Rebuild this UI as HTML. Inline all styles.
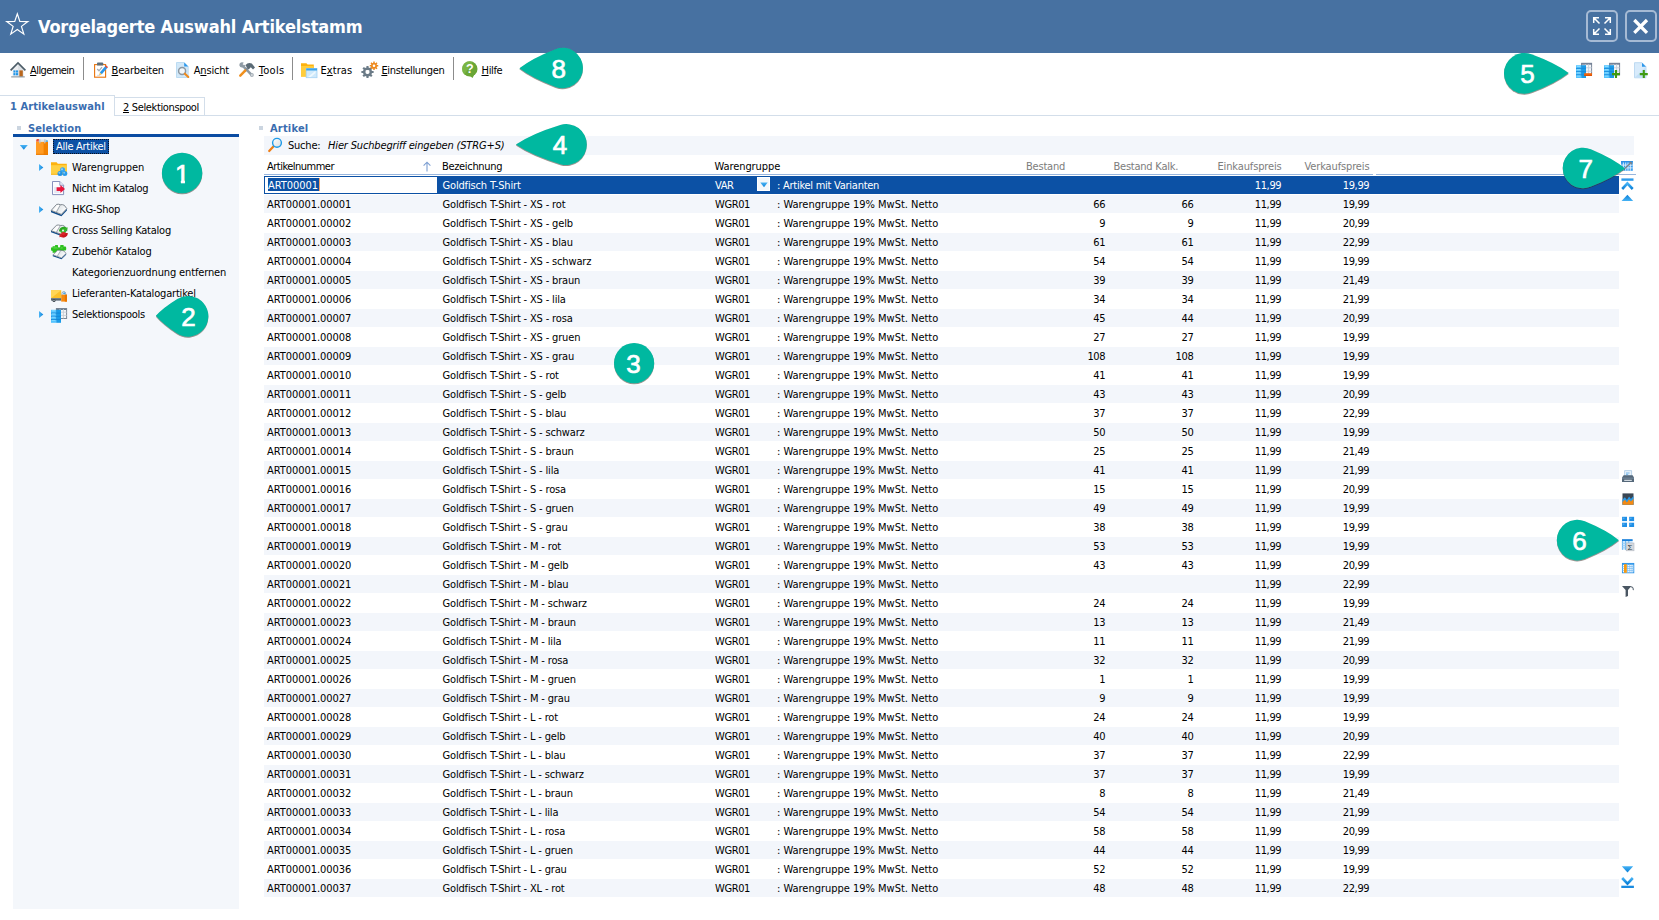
<!DOCTYPE html>
<html lang="de"><head><meta charset="utf-8"><title>Vorgelagerte Auswahl Artikelstamm</title>
<style>
*{box-sizing:border-box}
html,body{margin:0;padding:0}
body{width:1659px;height:920px;overflow:hidden;background:#fff;position:relative;font-family:'DejaVu Sans Condensed','Liberation Sans',sans-serif;font-size:11px;color:#000}
.abs{position:absolute}
svg{position:absolute;overflow:visible}
.t{position:absolute;height:14px;line-height:14px;white-space:nowrap}
.b{font-weight:bold;color:#3a6db0}
#title{left:0;top:0;width:1659px;height:53px;background:#4771a1}
#title .tt{position:absolute;left:38px;top:15px;font-weight:bold;font-size:18px;line-height:24px;height:24px;color:#fff;white-space:nowrap}
.tb{position:absolute;top:10px;width:32px;height:32px;border:2px solid #a6bad4;border-radius:5px}
.msep{position:absolute;top:57px;width:1px;height:23px;background:#8c8c8c}
.bul{position:absolute;width:4px;height:4px;background:#cbd5e0}
#left{left:13px;top:137px;width:226px;height:772px;background:#f4f7fb}
.row{position:absolute;left:264px;width:1355px;height:19px}
.row.s{background:#f3f6fb;background-clip:content-box;padding-top:1px}
.c{position:absolute;top:1px;height:19px;line-height:19px;white-space:nowrap}
.sel .c{top:1px}
.r{text-align:right}
.g{color:#7c7c7c}

.c1{left:3px;letter-spacing:-0.060px}
.c2{left:178.5px;letter-spacing:-0.162px}
.c3{left:451px;letter-spacing:-0.380px}
.c4{left:513px;letter-spacing:-0.017px}
.n1{left:741.5px;width:100px;letter-spacing:-0.382px;padding-right:0.382px}
.n2{left:829.7px;width:100px;letter-spacing:-0.382px;padding-right:0.382px}
.n3{left:917.6px;width:100px;letter-spacing:-0.382px;padding-right:0.382px}
.n4{left:1005.6px;width:100px;letter-spacing:-0.382px;padding-right:0.382px}
</style></head><body>
<div id="title" class="abs">
<svg style="left:4px;top:11px" width="28" height="28" viewBox="0 0 28 28"><path transform="translate(13.3 13.3) scale(0.945) translate(-13.5 -13.9)" d="M13.5 2.8 L16.2 10.9 L24.7 11 L17.9 16.1 L20.4 24.3 L13.5 19.4 L6.6 24.3 L9.1 16.1 L2.3 11 L10.8 10.9 Z" fill="none" stroke="#fff" stroke-width="1.25" stroke-linejoin="miter"/></svg>
<div class="tt" style="letter-spacing:-0.158px">Vorgelagerte Auswahl Artikelstamm</div>
<div class="tb" style="left:1586px"><svg style="left:-2px;top:-2px" width="32" height="32" viewBox="0 0 32 32"><g stroke="#fff" stroke-width="1.5" fill="none"><path d="M13.5 13.5L8 8M7.7 13V7.7H13M18.5 13.5L24 8M19 7.7h5.3V13M13.5 18.5L8 24M7.7 19v5.3H13M18.5 18.5L24 24M24.3 19v5.3H19"/></g></svg></div>
<div class="tb" style="left:1625px"><svg style="left:-2px;top:-2px" width="32" height="32" viewBox="0 0 32 32"><path d="M9.3 10L22 22.8M22 10L9.3 22.8" stroke="#fff" stroke-width="3.3" fill="none"/></svg></div>
</div>
<div class="t" style="left:30.1px;top:64px;letter-spacing:-0.588px;"><u>A</u>llgemein</div>
<div class="t" style="left:111.6px;top:64px;letter-spacing:-0.21px;"><u>B</u>earbeiten</div>
<div class="t" style="left:193.8px;top:64px;letter-spacing:-0.208px;">A<u>n</u>sicht</div>
<div class="t" style="left:258.8px;top:64px;letter-spacing:0.278px;"><u>T</u>ools</div>
<div class="t" style="left:320.5px;top:64px;letter-spacing:0.064px;">E<u>x</u>tras</div>
<div class="t" style="left:381.4px;top:64px;letter-spacing:-0.309px;"><u>E</u>instellungen</div>
<div class="t" style="left:481.5px;top:64px;letter-spacing:-0.329px;"><u>H</u>ilfe</div>
<div class="msep" style="left:83px"></div>
<div class="msep" style="left:292px"></div>
<div class="msep" style="left:453px"></div>
<svg style="left:0;top:0" width="1659" height="100" viewBox="0 0 1659 100">
<!-- house -->
<g transform="translate(10,62)">
<path d="M2.6 7.6L8 2.6l5.4 5V14.6H2.6z" fill="#eceef1"/>
<path d="M8 2.6l5.4 5V14.6H8z" fill="#dde1e5"/>
<path d="M0.6 8.3L8 1l7.4 7.3" fill="none" stroke="#4c5c67" stroke-width="1.7" stroke-linejoin="miter"/>
<rect x="3.4" y="8.4" width="2.1" height="2.2" fill="#2196e8"/><rect x="6" y="8.4" width="2.1" height="2.2" fill="#2196e8"/>
<rect x="3.4" y="11.1" width="2.1" height="2.2" fill="#2196e8"/><rect x="6" y="11.1" width="2.1" height="2.2" fill="#2196e8"/>
<rect x="9.4" y="8.4" width="3.4" height="6.2" fill="#b9671d"/>
<rect x="1.2" y="14.4" width="13.6" height="1" fill="#7f8c95"/>
</g>
<!-- clipboard -->
<g transform="translate(94,62)">
<rect x="0.6" y="2.6" width="11" height="12.6" fill="#fff" stroke="#e8730c" stroke-width="1.1"/>
<rect x="3" y="0.4" width="6.2" height="3.2" rx="0.9" fill="#5d6e7b"/>
<path d="M3.2 7L5 8.8l3-3.6" fill="none" stroke="#a4adb5" stroke-width="1.3"/>
<path d="M12.6 4.6L6.8 11.4" stroke="#2a96ea" stroke-width="2.7" fill="none"/>
<path d="M12 3.2l2 1.9-1 1.2-2-1.9z" fill="#e8503a"/>
<path d="M5.9 10.5l1.9 1.7-2.9 1.3z" fill="#f5c04a"/>
<path d="M3.2 13.3h3" stroke="#c8ced4" stroke-width="0.9"/>
</g>
<!-- view -->
<g transform="translate(176,62)">
<path d="M0.5 0.5H8.2L12.2 4.5V15.5H0.5z" fill="#d2e8f8" stroke="#b7d9f2" stroke-width="0.9"/>
<path d="M8.2 0.5L12.2 4.5H8.2z" fill="#2c97ea"/>
<circle cx="6.1" cy="8.9" r="3.5" fill="#f3f7fa" stroke="#8c98a2" stroke-width="1.5"/>
<path d="M8.9 11.7l3.4 3.3" stroke="#f08a1c" stroke-width="2.1" stroke-linecap="round"/>
</g>
<!-- tools -->
<g transform="translate(239,62)">
<path d="M3.3 3.3L12.6 12.8" stroke="#8f9ba5" stroke-width="2.5" stroke-linecap="round"/>
<path d="M0.3 3.2a3 3 0 0 1 4.6-2.5L3 2.6l1 1.3 2.2-1.5A3 3 0 0 1 0.3 3.2z" fill="#8f9ba5"/>
<circle cx="12.9" cy="13" r="1.9" fill="#a5afb7"/><circle cx="12.9" cy="13" r="0.7" fill="#fff"/>
<path d="M5.5 9.4L9.4 5.4" stroke="#7f8b95" stroke-width="2.3"/><path d="M1.3 13.6L6.2 8.7" stroke="#f0901e" stroke-width="2.5" stroke-linecap="round"/>
<path d="M6.4 3.2Q9.2 -0.2 12.8 1.6L16 5.6l-2 1.8-2.2-2.2-2.2 2.3z" fill="#5b6b76"/>
</g>
<!-- extras -->
<g transform="translate(301,63)">
<path d="M0 0.3H5.4L6.6 1.6H12.8V13.6H0z" fill="#fdb20f"/>
<path d="M0 3H12.8V13.6H0z" fill="#ffcd3c"/>
<rect x="5.2" y="5.4" width="10.8" height="9.3" fill="#cfe9fb" stroke="#a6d3f5" stroke-width="0.8"/>
<rect x="5.2" y="5.4" width="10.8" height="2.1" fill="#3ba3ec"/>
<path d="M7 14l7.5-6.3v2.4L9.8 14z" fill="#eef8fe"/>
</g>
<!-- gears -->
<path d="M373.61 70.93L373.61 73.07L371.97 73.07L371.42 74.40L372.57 75.57L371.07 77.07L369.90 75.92L368.57 76.47L368.57 78.11L366.43 78.11L366.43 76.47L365.10 75.92L363.93 77.07L362.43 75.57L363.58 74.40L363.03 73.07L361.39 73.07L361.39 70.93L363.03 70.93L363.58 69.60L362.43 68.43L363.93 66.93L365.10 68.08L366.43 67.53L366.43 65.89L368.57 65.89L368.57 67.53L369.90 68.08L371.07 66.93L372.57 68.43L371.42 69.60L371.97 70.93ZM365.40 72.00 a2.10 2.10 0 1 0 4.20 0a2.10 2.10 0 1 0 -4.20 0Z" fill="#6b7b87" fill-rule="evenodd"/><path d="M378.24 65.06L378.24 66.54L377.01 66.52L376.64 67.42L377.52 68.27L376.47 69.32L375.62 68.44L374.72 68.81L374.74 70.04L373.26 70.04L373.28 68.81L372.38 68.44L371.53 69.32L370.48 68.27L371.36 67.42L370.99 66.52L369.76 66.54L369.76 65.06L370.99 65.08L371.36 64.18L370.48 63.33L371.53 62.28L372.38 63.16L373.28 62.79L373.26 61.56L374.74 61.56L374.72 62.79L375.62 63.16L376.47 62.28L377.52 63.33L376.64 64.18L377.01 65.08ZM372.70 65.80 a1.30 1.30 0 1 0 2.60 0a1.30 1.30 0 1 0 -2.60 0Z" fill="#ee8a1e" fill-rule="evenodd"/>
<path d="M365.6 70.3h3.8l-1.2 3.4h-1.4z" fill="#fff" opacity="0.85"/>
<!-- help -->
<g transform="translate(462,61)">
<circle cx="7.8" cy="7.9" r="7.7" fill="#6aa635"/>
<path d="M7.8 0.2A7.7 7.7 0 0 0 2.4 13.4L11 1z" fill="#80b94a" opacity="0.75"/>
<path d="M7.2 14.6l6-2.8-2.6 5.2z" fill="#6aa635"/>
<text x="7.8" y="12.2" font-family="Liberation Sans, sans-serif" font-weight="bold" font-size="12.5" fill="#fff" text-anchor="middle">?</text>
</g>
</svg>

<div class="abs" style="left:0;top:95px;width:115px;height:21px;border-top:1px solid #d3deea;border-right:1px solid #d3deea"></div>
<div class="abs" style="left:114px;top:97px;width:91px;height:19px;border:1px solid #d3deea"></div>
<div class="abs" style="left:114px;top:115px;width:1545px;height:1px;background:#d3deea"></div>
<div class="t b" style="left:10px;top:100px;letter-spacing:0.09px;">1 Artikelauswahl</div>
<div class="t" style="left:123px;top:101px;letter-spacing:-0.356px;"><u>2</u> Selektionspool</div>
<div class="bul" style="left:17px;top:126px"></div>
<div class="t b" style="left:28px;top:122px;letter-spacing:0.1px;">Selektion</div>
<div class="bul" style="left:259px;top:126px"></div>
<div class="t b" style="left:270px;top:122px;letter-spacing:0.19px;">Artikel</div>
<div class="abs" style="left:13px;top:134px;width:226px;height:3px;background:#0a4ca2"></div>
<div id="left" class="abs"></div>
<div class="abs" style="left:53px;top:139px;width:56px;height:15px;background:#0c51a5;border:1px dotted #0a1020"></div>
<div class="t" style="left:56px;top:140px;letter-spacing:-0.287px;color:#fff">Alle Artikel</div>
<div class="t" style="left:72px;top:161px;letter-spacing:-0.055px;">Warengruppen</div>
<div class="t" style="left:72px;top:182px;letter-spacing:-0.354px;">Nicht im Katalog</div>
<div class="t" style="left:72px;top:203px;letter-spacing:-0.254px;">HKG-Shop</div>
<div class="t" style="left:72px;top:224px;letter-spacing:-0.238px;">Cross Selling Katalog</div>
<div class="t" style="left:72px;top:245px;letter-spacing:-0.19px;">Zubehör Katalog</div>
<div class="t" style="left:72px;top:266px;letter-spacing:-0.135px;">Kategorienzuordnung entfernen</div>
<div class="t" style="left:72px;top:287px;letter-spacing:-0.179px;">Lieferanten-Katalogartikel</div>
<div class="t" style="left:72px;top:308px;letter-spacing:-0.304px;">Selektionspools</div>
<svg style="left:0;top:0" width="260" height="340" viewBox="0 0 260 340">
<defs>
<linearGradient id="gb" x1="0" y1="0" x2="0" y2="1"><stop offset="0" stop-color="#4db6f6"/><stop offset="1" stop-color="#0b82da"/></linearGradient>
<linearGradient id="gbh" x1="0" y1="0" x2="1" y2="0"><stop offset="0" stop-color="#4db6f6"/><stop offset="1" stop-color="#0b82da"/></linearGradient>
<linearGradient id="pg" x1="0" y1="0" x2="1" y2="0.4"><stop offset="0" stop-color="#dfe3e7"/><stop offset="0.45" stop-color="#ffffff"/><stop offset="0.55" stop-color="#e3e7ea"/><stop offset="1" stop-color="#fbfcfd"/></linearGradient>
</defs>
<!-- expanders -->
<path d="M19.8 144.9h8l-4 4.8z" fill="url(#gb)"/>
<path d="M39 164l4.3 3.5-4.3 3.5z" fill="url(#gbh)"/>
<path d="M39 206l4.3 3.5-4.3 3.5z" fill="url(#gbh)"/>
<path d="M39 311l4.3 3.5-4.3 3.5z" fill="url(#gbh)"/>
<!-- bag -->
<g transform="translate(36,139)">
<rect x="0" y="2.4" width="12" height="13.4" fill="#ff9b22"/>
<rect x="7.6" y="2.4" width="4.4" height="13.4" fill="#f28200"/>
<rect x="0" y="14.8" width="12" height="1" fill="#e87800"/>
<path d="M0.2 2.6V1.4Q0.2 0 1.6 0H3v2.6z" fill="#e8503a"/>
<rect x="2.8" y="0.4" width="8" height="2.4" fill="#dbe6ef"/>
<rect x="3.2" y="0.2" width="1.3" height="4.2" rx="0.6" fill="#b9c3cc"/><rect x="8.2" y="0.2" width="1.3" height="4.2" rx="0.6" fill="#b9c3cc"/>
<rect x="9.8" y="1.2" width="2" height="1.8" fill="#59b5f2"/>
</g>
<!-- folder with cubes -->
<g transform="translate(51,162)">
<path d="M0 0.3H5.6L6.8 1.7H15.8V12.6H0z" fill="#fdb20f"/>
<path d="M0 3.2H15.8V12.6H0z" fill="#ffd042"/>
<path d="M0 11.8H15.8V12.6H0z" fill="#f5b21a"/>
<circle cx="11.6" cy="7.8" r="2.5" fill="#3aa6f0"/><circle cx="9" cy="11.4" r="2.5" fill="#2292e4"/><circle cx="13.8" cy="11.4" r="2.5" fill="#2a9bea"/>
<circle cx="11" cy="7.2" r="1" fill="#8fd0fa"/><circle cx="8.4" cy="10.8" r="1" fill="#7cc6f7"/><circle cx="13.2" cy="10.8" r="1" fill="#7cc6f7"/>
</g>
<!-- doc red arrow -->
<g transform="translate(52,181)">
<path d="M0.5 0.5H7.8L11.6 4.3V13.6H0.5z" fill="#fbfbfe" stroke="#7a86b6" stroke-width="0.9"/>
<path d="M7.8 0.5V4.3H11.6" fill="#e9ecf6" stroke="#7a86b6" stroke-width="0.8"/>
<path d="M2.2 7h3M2.2 9h2.4M2.2 11h5.5" stroke="#c3c9e2" stroke-width="0.8"/>
<path d="M4.6 6.3H8.4V4.1L13 8.1 8.4 12.1V9.9H4.6z" fill="#e8153c"/>
</g>
<!-- HKG book -->
<g transform="translate(51,204)">
<path d="M0 6.5L10.3 10.5L15.9 4.7V6.4L10.4 12.3L0 8.2z" fill="#0e4c8c"/>
<path d="M0.2 6.4L5.6 0.4Q7.6 -0.1 9.4 0.7Q11.6 0.3 13.3 1.3L15.8 4.6L10.3 10.4z" fill="url(#pg)" stroke="#69737c" stroke-width="0.85" stroke-linejoin="round"/>
<path d="M9.4 0.8L5.3 8.3" stroke="#8e979f" stroke-width="0.8"/>
</g>
<!-- cross selling -->
<g transform="translate(51,224.8)">
<g transform="scale(1,0.92)">
<path d="M0 6.5L10.3 10.5L15.9 4.7V6.4L10.4 12.3L0 8.2z" fill="#0e4c8c"/>
<path d="M0.2 6.4L5.6 0.4Q7.6 -0.1 9.4 0.7Q11.6 0.3 13.3 1.3L15.8 4.6L10.3 10.4z" fill="url(#pg)" stroke="#69737c" stroke-width="0.85" stroke-linejoin="round"/>
<path d="M9.4 0.8L5.3 8.3" stroke="#8e979f" stroke-width="0.8"/>
</g>
<circle cx="12.2" cy="5.6" r="3" fill="#3dbb30"/><path d="M9.2 6.6A3.4 3.4 0 0 1 15.4 4.6" fill="none" stroke="#2aa81f" stroke-width="2.4"/><circle cx="12" cy="5.8" r="1" fill="#f4f7fb"/>
<path d="M13.2 3.4L16.6 2.4L16.2 6.4z" fill="#35b52a"/>
<circle cx="12.6" cy="9.8" r="2.6" fill="#d9252a"/><path d="M15.6 8.2A3.3 3.3 0 0 1 9.8 10.4" fill="none" stroke="#c8161e" stroke-width="2.4"/>
<path d="M11.8 11.8L8.4 12.4L8.8 8.2z" fill="#d9252a"/>
</g>
<!-- zubehoer -->
<g transform="translate(51,245)">
<path d="M1.6 1.2H4.2Q3.4 -0.2 5 0H6.2Q7.4 0 7 1.2Q6.6 2.6 8 2.6Q9.6 2.6 9.2 1.2Q8.8 0 10 0H12.6V1.6H13.8Q15.2 1.4 15.2 3V4.2Q15.2 5.6 13.8 5.4H12.6V7.8H1.6V5.8Q0 6.2 0 4.6V3.4Q0 2 1.6 2.4z" fill="#2cc01e"/>
<path d="M2.4 2.2H6Q6.6 3.6 8.2 3.6Q9.8 3.6 10.2 2.2H11.6V3.4H2.4z" fill="#6fe05c" opacity="0.7"/>
<g transform="translate(1.8,5) scale(0.84,0.76)">
<path d="M0 6.5L10.3 10.5L15.9 4.7V6.4L10.4 12.3L0 8.2z" fill="#0e4c8c"/>
<path d="M0.2 6.4L5.6 0.4Q7.6 -0.1 9.4 0.7Q11.6 0.3 13.3 1.3L15.8 4.6L10.3 10.4z" fill="url(#pg)" stroke="#69737c" stroke-width="0.85" stroke-linejoin="round"/>
<path d="M9.4 0.8L5.3 8.3" stroke="#8e979f" stroke-width="0.8"/>
</g>
</g>
<!-- truck -->
<g transform="translate(51,290)">
<rect x="0" y="0.2" width="10.2" height="8" fill="#fbc02a"/>
<path d="M0 0.2H10.2L0 8.2z" fill="#ffd657"/>
<rect x="0" y="8.2" width="10.2" height="2.4" fill="#5a6872"/>
<circle cx="3" cy="10.4" r="1.5" fill="#3a444c"/><circle cx="3" cy="10.4" r="0.6" fill="#cfd6dc"/>
<rect x="10.2" y="4.6" width="5.8" height="7" fill="#f58a12"/>
<rect x="13.8" y="4.6" width="2.2" height="7" fill="#e87500"/>
<path d="M11 4.8V3.4a1.8 1.8 0 0 1 3.6 0v1.4" fill="none" stroke="#8aa0b2" stroke-width="0.9"/>
<rect x="12.2" y="2.6" width="2" height="1.6" fill="#3aa6f0"/>
</g>
<!-- selektionspools -->
<g transform="translate(51,308)">
<rect x="5.4" y="0.5" width="10.2" height="10" fill="#f3f5f7" stroke="#7b8896" stroke-width="1"/>
<path d="M5.4 1.4H15.6" stroke="#6c7a89" stroke-width="1.2"/>
<path d="M9 1v9.4M12.4 1v9.4M5.4 4.2H15.6M5.4 7.4H15.6" stroke="#c6cdd5" stroke-width="0.9"/>
<rect x="0" y="1.8" width="5.2" height="13" fill="#52c3ff"/>
<rect x="5.2" y="1.8" width="4.8" height="13" fill="#1a9be8"/>
<path d="M0 5.1H10M0 8.3H10M0 11.5H10" stroke="#1286d8" stroke-width="0.9"/>
<path d="M0.8 2.8h3.6M0.8 6h3.6M0.8 9.2h3.6M0.8 12.4h3.6" stroke="#8edcff" stroke-width="0.9"/>
</g>
</svg>

<div class="abs" style="left:264px;top:136px;width:1370px;height:19px;background:#f3f6fb"></div>
<svg style="left:266px;top:136px" width="18" height="18" viewBox="0 0 18 18"><defs><linearGradient id="mg" x1="0" y1="0" x2="1" y2="1"><stop offset="0" stop-color="#ffffff"/><stop offset="1" stop-color="#d9dde1"/></linearGradient></defs><path d="M7.4 10.4L3.2 15" stroke="#ef7d14" stroke-width="2.2" stroke-linecap="round"/><circle cx="11" cy="6.8" r="4.4" fill="url(#mg)" stroke="#1e9be8" stroke-width="1.4"/></svg>
<div class="t" style="left:288px;top:139px;letter-spacing:-0.221px;">Suche:</div>
<div class="t" style="left:328px;top:139px;letter-spacing:-0.157px;font-style:italic">Hier Suchbegriff eingeben (STRG+S)</div>
<div class="t" style="left:267px;top:160px;letter-spacing:-0.512px;">Artikelnummer</div>
<div class="t" style="left:442px;top:160px;letter-spacing:-0.323px;">Bezeichnung</div>
<div class="t" style="left:714.5px;top:160px;letter-spacing:-0.083px;">Warengruppe</div>
<div class="t" style="left:1026.0px;top:160px;letter-spacing:-0.208px;color:#7c7c7c">Bestand</div>
<div class="t" style="left:1113.5px;top:160px;letter-spacing:-0.231px;color:#7c7c7c">Bestand Kalk.</div>
<div class="t" style="left:1217.5px;top:160px;letter-spacing:-0.142px;color:#7c7c7c">Einkaufspreis</div>
<div class="t" style="left:1304.5px;top:160px;letter-spacing:-0.132px;color:#7c7c7c">Verkaufspreis</div>
<div class="abs" style="left:264px;top:174px;width:1109px;height:1px;background:#98b6de"></div>
<div class="abs" style="left:1376px;top:174px;width:260px;height:1px;background:#98b6de"></div>
<svg style="left:422px;top:161px" width="10" height="11" viewBox="0 0 10 11"><path d="M5 10.5V1.8M1.6 4.6L5 1.2l3.4 3.4" stroke="#7d9fd2" stroke-width="1.1" fill="none"/></svg>
<div class="row sel" style="top:176px;height:18px;background:#0c51a5;color:#fff">
<div class="abs" style="left:0;top:0;width:174px;height:18px;background:#fff;border:1px solid #0c51a5"></div>
<div class="abs" style="left:4px;top:2px;width:51px;height:13px;background:#0c51a5"></div>
<div class="abs" style="left:54.5px;top:2px;width:1px;height:13px;background:#f3a266"></div>
<div class="c c1" style="line-height:18px;left:4px">ART00001</div><div class="c c2" style="line-height:18px">Goldfisch T-Shirt</div><div class="c c3" style="line-height:18px;letter-spacing:-0.359px">VAR</div>
<div class="abs" style="left:493px;top:1px;width:13px;height:14px;background:#f4f7fa;border:1px solid #fff"></div><svg style="left:495.5px;top:5.5px" width="8" height="6" viewBox="0 0 8 6"><defs><linearGradient id="gd" x1="0" y1="0" x2="0" y2="1"><stop offset="0" stop-color="#4ab3f4"/><stop offset="1" stop-color="#0c83da"/></linearGradient></defs><path d="M0.3 0.5h7.4L4 5.3z" fill="url(#gd)"/></svg>
<div class="c c4" style="line-height:18px;letter-spacing:-0.257px">: Artikel mit Varianten</div>
<div class="c r n3" style="line-height:18px">11,99</div><div class="c r n4" style="line-height:18px">19,99</div>
</div>
<div class="row s" style="top:194px"><div class="c c1">ART00001.00001</div><div class="c c2">Goldfisch T-Shirt - XS - rot</div><div class="c c3">WGR01</div><div class="c c4">: Warengruppe 19% MwSt. Netto</div><div class="c r n1">66</div><div class="c r n2">66</div><div class="c r n3">11,99</div><div class="c r n4">19,99</div></div>
<div class="row" style="top:213px"><div class="c c1">ART00001.00002</div><div class="c c2">Goldfisch T-Shirt - XS - gelb</div><div class="c c3">WGR01</div><div class="c c4">: Warengruppe 19% MwSt. Netto</div><div class="c r n1">9</div><div class="c r n2">9</div><div class="c r n3">11,99</div><div class="c r n4">20,99</div></div>
<div class="row s" style="top:232px"><div class="c c1">ART00001.00003</div><div class="c c2">Goldfisch T-Shirt - XS - blau</div><div class="c c3">WGR01</div><div class="c c4">: Warengruppe 19% MwSt. Netto</div><div class="c r n1">61</div><div class="c r n2">61</div><div class="c r n3">11,99</div><div class="c r n4">22,99</div></div>
<div class="row" style="top:251px"><div class="c c1">ART00001.00004</div><div class="c c2">Goldfisch T-Shirt - XS - schwarz</div><div class="c c3">WGR01</div><div class="c c4">: Warengruppe 19% MwSt. Netto</div><div class="c r n1">54</div><div class="c r n2">54</div><div class="c r n3">11,99</div><div class="c r n4">19,99</div></div>
<div class="row s" style="top:270px"><div class="c c1">ART00001.00005</div><div class="c c2">Goldfisch T-Shirt - XS - braun</div><div class="c c3">WGR01</div><div class="c c4">: Warengruppe 19% MwSt. Netto</div><div class="c r n1">39</div><div class="c r n2">39</div><div class="c r n3">11,99</div><div class="c r n4">21,49</div></div>
<div class="row" style="top:289px"><div class="c c1">ART00001.00006</div><div class="c c2">Goldfisch T-Shirt - XS - lila</div><div class="c c3">WGR01</div><div class="c c4">: Warengruppe 19% MwSt. Netto</div><div class="c r n1">34</div><div class="c r n2">34</div><div class="c r n3">11,99</div><div class="c r n4">21,99</div></div>
<div class="row s" style="top:308px"><div class="c c1">ART00001.00007</div><div class="c c2">Goldfisch T-Shirt - XS - rosa</div><div class="c c3">WGR01</div><div class="c c4">: Warengruppe 19% MwSt. Netto</div><div class="c r n1">45</div><div class="c r n2">44</div><div class="c r n3">11,99</div><div class="c r n4">20,99</div></div>
<div class="row" style="top:327px"><div class="c c1">ART00001.00008</div><div class="c c2">Goldfisch T-Shirt - XS - gruen</div><div class="c c3">WGR01</div><div class="c c4">: Warengruppe 19% MwSt. Netto</div><div class="c r n1">27</div><div class="c r n2">27</div><div class="c r n3">11,99</div><div class="c r n4">19,99</div></div>
<div class="row s" style="top:346px"><div class="c c1">ART00001.00009</div><div class="c c2">Goldfisch T-Shirt - XS - grau</div><div class="c c3">WGR01</div><div class="c c4">: Warengruppe 19% MwSt. Netto</div><div class="c r n1">108</div><div class="c r n2">108</div><div class="c r n3">11,99</div><div class="c r n4">19,99</div></div>
<div class="row" style="top:365px"><div class="c c1">ART00001.00010</div><div class="c c2">Goldfisch T-Shirt - S - rot</div><div class="c c3">WGR01</div><div class="c c4">: Warengruppe 19% MwSt. Netto</div><div class="c r n1">41</div><div class="c r n2">41</div><div class="c r n3">11,99</div><div class="c r n4">19,99</div></div>
<div class="row s" style="top:384px"><div class="c c1">ART00001.00011</div><div class="c c2">Goldfisch T-Shirt - S - gelb</div><div class="c c3">WGR01</div><div class="c c4">: Warengruppe 19% MwSt. Netto</div><div class="c r n1">43</div><div class="c r n2">43</div><div class="c r n3">11,99</div><div class="c r n4">20,99</div></div>
<div class="row" style="top:403px"><div class="c c1">ART00001.00012</div><div class="c c2">Goldfisch T-Shirt - S - blau</div><div class="c c3">WGR01</div><div class="c c4">: Warengruppe 19% MwSt. Netto</div><div class="c r n1">37</div><div class="c r n2">37</div><div class="c r n3">11,99</div><div class="c r n4">22,99</div></div>
<div class="row s" style="top:422px"><div class="c c1">ART00001.00013</div><div class="c c2">Goldfisch T-Shirt - S - schwarz</div><div class="c c3">WGR01</div><div class="c c4">: Warengruppe 19% MwSt. Netto</div><div class="c r n1">50</div><div class="c r n2">50</div><div class="c r n3">11,99</div><div class="c r n4">19,99</div></div>
<div class="row" style="top:441px"><div class="c c1">ART00001.00014</div><div class="c c2">Goldfisch T-Shirt - S - braun</div><div class="c c3">WGR01</div><div class="c c4">: Warengruppe 19% MwSt. Netto</div><div class="c r n1">25</div><div class="c r n2">25</div><div class="c r n3">11,99</div><div class="c r n4">21,49</div></div>
<div class="row s" style="top:460px"><div class="c c1">ART00001.00015</div><div class="c c2">Goldfisch T-Shirt - S - lila</div><div class="c c3">WGR01</div><div class="c c4">: Warengruppe 19% MwSt. Netto</div><div class="c r n1">41</div><div class="c r n2">41</div><div class="c r n3">11,99</div><div class="c r n4">21,99</div></div>
<div class="row" style="top:479px"><div class="c c1">ART00001.00016</div><div class="c c2">Goldfisch T-Shirt - S - rosa</div><div class="c c3">WGR01</div><div class="c c4">: Warengruppe 19% MwSt. Netto</div><div class="c r n1">15</div><div class="c r n2">15</div><div class="c r n3">11,99</div><div class="c r n4">20,99</div></div>
<div class="row s" style="top:498px"><div class="c c1">ART00001.00017</div><div class="c c2">Goldfisch T-Shirt - S - gruen</div><div class="c c3">WGR01</div><div class="c c4">: Warengruppe 19% MwSt. Netto</div><div class="c r n1">49</div><div class="c r n2">49</div><div class="c r n3">11,99</div><div class="c r n4">19,99</div></div>
<div class="row" style="top:517px"><div class="c c1">ART00001.00018</div><div class="c c2">Goldfisch T-Shirt - S - grau</div><div class="c c3">WGR01</div><div class="c c4">: Warengruppe 19% MwSt. Netto</div><div class="c r n1">38</div><div class="c r n2">38</div><div class="c r n3">11,99</div><div class="c r n4">19,99</div></div>
<div class="row s" style="top:536px"><div class="c c1">ART00001.00019</div><div class="c c2">Goldfisch T-Shirt - M - rot</div><div class="c c3">WGR01</div><div class="c c4">: Warengruppe 19% MwSt. Netto</div><div class="c r n1">53</div><div class="c r n2">53</div><div class="c r n3">11,99</div><div class="c r n4">19,99</div></div>
<div class="row" style="top:555px"><div class="c c1">ART00001.00020</div><div class="c c2">Goldfisch T-Shirt - M - gelb</div><div class="c c3">WGR01</div><div class="c c4">: Warengruppe 19% MwSt. Netto</div><div class="c r n1">43</div><div class="c r n2">43</div><div class="c r n3">11,99</div><div class="c r n4">20,99</div></div>
<div class="row s" style="top:574px"><div class="c c1">ART00001.00021</div><div class="c c2">Goldfisch T-Shirt - M - blau</div><div class="c c3">WGR01</div><div class="c c4">: Warengruppe 19% MwSt. Netto</div><div class="c r n1"></div><div class="c r n2"></div><div class="c r n3">11,99</div><div class="c r n4">22,99</div></div>
<div class="row" style="top:593px"><div class="c c1">ART00001.00022</div><div class="c c2">Goldfisch T-Shirt - M - schwarz</div><div class="c c3">WGR01</div><div class="c c4">: Warengruppe 19% MwSt. Netto</div><div class="c r n1">24</div><div class="c r n2">24</div><div class="c r n3">11,99</div><div class="c r n4">19,99</div></div>
<div class="row s" style="top:612px"><div class="c c1">ART00001.00023</div><div class="c c2">Goldfisch T-Shirt - M - braun</div><div class="c c3">WGR01</div><div class="c c4">: Warengruppe 19% MwSt. Netto</div><div class="c r n1">13</div><div class="c r n2">13</div><div class="c r n3">11,99</div><div class="c r n4">21,49</div></div>
<div class="row" style="top:631px"><div class="c c1">ART00001.00024</div><div class="c c2">Goldfisch T-Shirt - M - lila</div><div class="c c3">WGR01</div><div class="c c4">: Warengruppe 19% MwSt. Netto</div><div class="c r n1">11</div><div class="c r n2">11</div><div class="c r n3">11,99</div><div class="c r n4">21,99</div></div>
<div class="row s" style="top:650px"><div class="c c1">ART00001.00025</div><div class="c c2">Goldfisch T-Shirt - M - rosa</div><div class="c c3">WGR01</div><div class="c c4">: Warengruppe 19% MwSt. Netto</div><div class="c r n1">32</div><div class="c r n2">32</div><div class="c r n3">11,99</div><div class="c r n4">20,99</div></div>
<div class="row" style="top:669px"><div class="c c1">ART00001.00026</div><div class="c c2">Goldfisch T-Shirt - M - gruen</div><div class="c c3">WGR01</div><div class="c c4">: Warengruppe 19% MwSt. Netto</div><div class="c r n1">1</div><div class="c r n2">1</div><div class="c r n3">11,99</div><div class="c r n4">19,99</div></div>
<div class="row s" style="top:688px"><div class="c c1">ART00001.00027</div><div class="c c2">Goldfisch T-Shirt - M - grau</div><div class="c c3">WGR01</div><div class="c c4">: Warengruppe 19% MwSt. Netto</div><div class="c r n1">9</div><div class="c r n2">9</div><div class="c r n3">11,99</div><div class="c r n4">19,99</div></div>
<div class="row" style="top:707px"><div class="c c1">ART00001.00028</div><div class="c c2">Goldfisch T-Shirt - L - rot</div><div class="c c3">WGR01</div><div class="c c4">: Warengruppe 19% MwSt. Netto</div><div class="c r n1">24</div><div class="c r n2">24</div><div class="c r n3">11,99</div><div class="c r n4">19,99</div></div>
<div class="row s" style="top:726px"><div class="c c1">ART00001.00029</div><div class="c c2">Goldfisch T-Shirt - L - gelb</div><div class="c c3">WGR01</div><div class="c c4">: Warengruppe 19% MwSt. Netto</div><div class="c r n1">40</div><div class="c r n2">40</div><div class="c r n3">11,99</div><div class="c r n4">20,99</div></div>
<div class="row" style="top:745px"><div class="c c1">ART00001.00030</div><div class="c c2">Goldfisch T-Shirt - L - blau</div><div class="c c3">WGR01</div><div class="c c4">: Warengruppe 19% MwSt. Netto</div><div class="c r n1">37</div><div class="c r n2">37</div><div class="c r n3">11,99</div><div class="c r n4">22,99</div></div>
<div class="row s" style="top:764px"><div class="c c1">ART00001.00031</div><div class="c c2">Goldfisch T-Shirt - L - schwarz</div><div class="c c3">WGR01</div><div class="c c4">: Warengruppe 19% MwSt. Netto</div><div class="c r n1">37</div><div class="c r n2">37</div><div class="c r n3">11,99</div><div class="c r n4">19,99</div></div>
<div class="row" style="top:783px"><div class="c c1">ART00001.00032</div><div class="c c2">Goldfisch T-Shirt - L - braun</div><div class="c c3">WGR01</div><div class="c c4">: Warengruppe 19% MwSt. Netto</div><div class="c r n1">8</div><div class="c r n2">8</div><div class="c r n3">11,99</div><div class="c r n4">21,49</div></div>
<div class="row s" style="top:802px"><div class="c c1">ART00001.00033</div><div class="c c2">Goldfisch T-Shirt - L - lila</div><div class="c c3">WGR01</div><div class="c c4">: Warengruppe 19% MwSt. Netto</div><div class="c r n1">54</div><div class="c r n2">54</div><div class="c r n3">11,99</div><div class="c r n4">21,99</div></div>
<div class="row" style="top:821px"><div class="c c1">ART00001.00034</div><div class="c c2">Goldfisch T-Shirt - L - rosa</div><div class="c c3">WGR01</div><div class="c c4">: Warengruppe 19% MwSt. Netto</div><div class="c r n1">58</div><div class="c r n2">58</div><div class="c r n3">11,99</div><div class="c r n4">20,99</div></div>
<div class="row s" style="top:840px"><div class="c c1">ART00001.00035</div><div class="c c2">Goldfisch T-Shirt - L - gruen</div><div class="c c3">WGR01</div><div class="c c4">: Warengruppe 19% MwSt. Netto</div><div class="c r n1">44</div><div class="c r n2">44</div><div class="c r n3">11,99</div><div class="c r n4">19,99</div></div>
<div class="row" style="top:859px"><div class="c c1">ART00001.00036</div><div class="c c2">Goldfisch T-Shirt - L - grau</div><div class="c c3">WGR01</div><div class="c c4">: Warengruppe 19% MwSt. Netto</div><div class="c r n1">52</div><div class="c r n2">52</div><div class="c r n3">11,99</div><div class="c r n4">19,99</div></div>
<div class="row s" style="top:878px"><div class="c c1">ART00001.00037</div><div class="c c2">Goldfisch T-Shirt - XL - rot</div><div class="c c3">WGR01</div><div class="c c4">: Warengruppe 19% MwSt. Netto</div><div class="c r n1">48</div><div class="c r n2">48</div><div class="c r n3">11,99</div><div class="c r n4">22,99</div></div>
<svg style="left:0;top:0" width="1659" height="920" viewBox="0 0 1659 920">
<defs>
<linearGradient id="rb" x1="0" y1="0" x2="0" y2="1"><stop offset="0" stop-color="#45b2f5"/><stop offset="1" stop-color="#0a80d8"/></linearGradient>
<linearGradient id="rb2" x1="0" y1="1" x2="0" y2="0"><stop offset="0" stop-color="#45b2f5"/><stop offset="1" stop-color="#0a80d8"/></linearGradient>
</defs>
<!-- top toolbar -->
<g transform="translate(1576,62.8)"><g>
<rect x="5.6" y="0.5" width="10" height="11.6" fill="#f3f5f8" stroke="#78869a" stroke-width="1"/>
<path d="M5.6 1.2H15.6" stroke="#69788d" stroke-width="1.3"/>
<path d="M9.4 1.6v10.4M12.6 1.6v10.4M5.6 5H15.6M5.6 8.4H15.6" stroke="#c9d1db" stroke-width="1"/>
<rect x="0" y="2.4" width="5.2" height="12.8" fill="#52c3ff"/>
<rect x="5.2" y="2.4" width="4.8" height="12.8" fill="#1a9be8"/>
<path d="M0 5.6H10M0 8.8H10M0 12H10" stroke="#1589da" stroke-width="0.9"/>
<path d="M0.8 3.6h3.6M0.8 6.9h3.6M0.8 10.1h3.6M0.8 13.3h3.6" stroke="#93deff" stroke-width="1"/>
</g><rect x="8.2" y="10.4" width="7.8" height="2.6" fill="#f0640a"/><rect x="8.2" y="12.2" width="7.8" height="0.8" fill="#d94a00"/></g>
<g transform="translate(1604,62.8)"><g>
<rect x="5.6" y="0.5" width="10" height="11.6" fill="#f3f5f8" stroke="#78869a" stroke-width="1"/>
<path d="M5.6 1.2H15.6" stroke="#69788d" stroke-width="1.3"/>
<path d="M9.4 1.6v10.4M12.6 1.6v10.4M5.6 5H15.6M5.6 8.4H15.6" stroke="#c9d1db" stroke-width="1"/>
<rect x="0" y="2.4" width="5.2" height="12.8" fill="#52c3ff"/>
<rect x="5.2" y="2.4" width="4.8" height="12.8" fill="#1a9be8"/>
<path d="M0 5.6H10M0 8.8H10M0 12H10" stroke="#1589da" stroke-width="0.9"/>
<path d="M0.8 3.6h3.6M0.8 6.9h3.6M0.8 10.1h3.6M0.8 13.3h3.6" stroke="#93deff" stroke-width="1"/>
</g><g transform="translate(12,11.3)"><path d="M-4 0H4M0 -4V4" stroke="#3f9a12" stroke-width="2.1"/></g></g>
<g transform="translate(1634,62.2)">
<path d="M0.5 0.5H8L12 4.5V15.6H0.5z" fill="#d8ebfb" stroke="#b9d7f1" stroke-width="0.9"/>
<path d="M1 15L11.5 5V15z" fill="#c2e0f8"/>
<path d="M8 0.5L12 4.5H8z" fill="#2c97ea"/>
<g transform="translate(9.8,11.9)"><path d="M-4 0H4M0 -4V4" stroke="#3f9a12" stroke-width="2.1"/></g>
</g>
<!-- grid config -->
<g transform="translate(1621,161)">
<rect x="0" y="0" width="11.8" height="9.8" fill="#3a9ef0"/>
<rect x="0" y="0" width="11.8" height="1.5" fill="#2a8fe6"/>
<path d="M2.4 1.5v8.3M4.7 1.5v8.3M7 1.5v8.3M9.3 1.5v8.3M0 4.1h11.8M0 6.9h11.8" stroke="#e4f1fc" stroke-width="0.9"/>
<path d="M3.4 7.8L9.2 2.4" stroke="#7a848d" stroke-width="1.4"/>
<path d="M8.2 1a1.9 1.9 0 0 1 2.7 2.6l-1-0.3-0.9-0.9z" fill="#7a848d"/>
</g>
<!-- top / up -->
<rect x="1621.4" y="178.4" width="12.1" height="2.4" fill="#2c9bec"/>
<path d="M1622.2 189L1627.4 183.4L1632.7 189" fill="none" stroke="url(#rb)" stroke-width="2.6"/>
<path d="M1621.6 201L1627.4 194.7L1633.2 201z" fill="url(#rb2)"/>
<!-- mid icons -->
<g transform="translate(1622,470.6)">
<path d="M2.6 0H9.6V5.4H2.6z" fill="#e6f1fa" stroke="#a9c7e2" stroke-width="0.8"/>
<path d="M4 2.4h3.6M4 3.8h2.2" stroke="#5aa9e6" stroke-width="0.8"/>
<path d="M1.6 4.6h9l1.4 2.4V11.4H0V7z" fill="#55687a"/>
<rect x="0" y="7" width="12" height="1.2" fill="#6f8396"/>
<rect x="2.2" y="9.2" width="7.6" height="1.1" fill="#dfe6ec"/>
</g>
<g transform="translate(1622.5,493.4)">
<rect x="0" y="0" width="11" height="11.4" fill="#3a4754"/>
<path d="M0 6.2L2.4 3.8 4.4 6.6 6.6 3.2 8.4 5.6 11 2.6V11.4H0z" fill="#2a9bea"/>
<path d="M0 8.6L2.4 6.4 4.4 9 6.6 5.8 8.4 8.2 11 5.4V11.4H0z" fill="#f58a12"/>
</g>
<g fill="#1f8fe6" transform="translate(1622.1,516.8)">
<rect x="0" y="0" width="4.9" height="4.3"/><rect x="7.1" y="0" width="4.9" height="4.3"/><rect x="0" y="5.9" width="4.9" height="4.3"/><rect x="7.1" y="5.9" width="4.9" height="4.3"/>
<path d="M0.8 1.4h1.6M7.9 1.4h1.6M0.8 7.3h1.6M7.9 7.3h1.6" stroke="#7cc4f6" stroke-width="0.8"/>
</g>
<g transform="translate(1622,539.2)">
<rect x="0" y="0" width="10.6" height="10.6" fill="#cfe7fb"/>
<rect x="0" y="0" width="10.6" height="1.8" fill="#1a80da"/>
<path d="M0.4 1.8v8.8M3.6 1.8v8.8M6.8 1.8v8.8" stroke="#58aef0" stroke-width="0.9"/>
<path d="M0 4.2h10.6M0 6.4h10.6M0 8.6h10.6" stroke="#8cc8f6" stroke-width="0.7"/>
<rect x="4.2" y="3.8" width="7.8" height="7.8" fill="#d5d9de" stroke="#b4bac2" stroke-width="0.6"/>
<text x="8.1" y="10.4" font-family="Liberation Sans, sans-serif" font-size="8" fill="#2c3640" text-anchor="middle">Σ</text>
</g>
<g transform="translate(1622,563)">
<rect x="0.4" y="0.4" width="11.4" height="9.4" fill="#fff" stroke="#2a93e8" stroke-width="0.9"/>
<rect x="0.4" y="0.4" width="11.4" height="1.4" fill="#2a93e8"/>
<path d="M5.6 1v8.8M7.8 1v8.8M10 1v8.8M0.4 3.6h11.4M0.4 5.6h11.4M0.4 7.6h11.4" stroke="#7bbcf2" stroke-width="0.8"/>
<rect x="2" y="1.2" width="2.8" height="8.6" fill="#f79a10"/>
</g>
<g transform="translate(1622,585.5)">
<path d="M0 0.4h9.4L6 4.6V10.6L3.6 11.4V4.6z" fill="#4a5662"/>
<path d="M8.6 1.2a2.6 2.6 0 0 1 2.6 3.4" fill="none" stroke="#5d6975" stroke-width="1.1"/>
</g>
<!-- down / bottom -->
<path d="M1621.8 866.2L1633.2 866.2L1627.5 872.4z" fill="url(#rb)"/>
<path d="M1622.2 878L1627.5 883.6L1632.8 878" fill="none" stroke="url(#rb)" stroke-width="2.6"/>
<rect x="1621.3" y="885.7" width="12.6" height="2.3" fill="#1a8be0"/>
</svg>

<svg style="left:0;top:0;pointer-events:none" width="1659" height="920" viewBox="0 0 1659 920"><defs><filter id="sh" x="-20%" y="-20%" width="140%" height="140%"><feDropShadow dx="0" dy="0.7" stdDeviation="0.45" flood-color="#3a2a20" flood-opacity="0.75"/></filter></defs>
<clipPath id="c1"><path d="M165 150H200V179.6H184.95V185H180.85V179.6H165z"/></clipPath>
<circle cx="182.10" cy="173.00" r="20.20" fill="#02b8a0" filter="url(#sh)"/><text clip-path="url(#c1)" x="182.20" y="182.90" font-family="Liberation Sans, sans-serif" font-size="26" fill="#fff" stroke="#fff" stroke-width="0.7" text-anchor="middle">1</text>
<circle cx="634.10" cy="363.10" r="20.10" fill="#02b8a0" filter="url(#sh)"/><text x="633.50" y="373.20" font-family="Liberation Sans, sans-serif" font-size="26" fill="#fff" stroke="#fff" stroke-width="0.7" text-anchor="middle">3</text>
<path d="M155.90 315.80 Q162.69 324.00 176.81 333.30 A20.35 20.35 0 1 0 177.35 298.96 Q162.94 307.81 155.90 315.80Z" fill="#02b8a0" filter="url(#sh)"/><text x="188.40" y="326.30" font-family="Liberation Sans, sans-serif" font-size="26" fill="#fff" stroke="#fff" stroke-width="0.7" text-anchor="middle">2</text>
<path d="M515.90 144.60 Q531.53 155.34 560.26 164.19 A20.50 20.50 0 1 0 560.26 125.01 Q531.53 133.86 515.90 144.60Z" fill="#02b8a0" filter="url(#sh)"/><text x="560.00" y="154.40" font-family="Liberation Sans, sans-serif" font-size="26" fill="#fff" stroke="#fff" stroke-width="0.7" text-anchor="middle">4</text>
<path d="M519.40 68.30 Q531.95 78.07 555.57 86.95 A20.25 20.25 0 1 0 555.31 49.15 Q531.82 58.36 519.40 68.30Z" fill="#02b8a0" filter="url(#sh)"/><text x="558.80" y="77.90" font-family="Liberation Sans, sans-serif" font-size="26" fill="#fff" stroke="#fff" stroke-width="0.7" text-anchor="middle">8</text>
<path d="M1568.70 72.90 Q1555.72 63.00 1531.39 54.13 A20.40 20.40 0 1 0 1531.73 92.34 Q1555.90 83.03 1568.70 72.90Z" fill="#02b8a0" filter="url(#sh)"/><text x="1527.60" y="83.40" font-family="Liberation Sans, sans-serif" font-size="26" fill="#fff" stroke="#fff" stroke-width="0.7" text-anchor="middle">5</text>
<path d="M1618.90 540.20 Q1607.16 530.50 1584.81 521.32 A20.30 20.30 0 1 0 1584.72 558.92 Q1607.11 549.85 1618.90 540.20Z" fill="#02b8a0" filter="url(#sh)"/><text x="1579.60" y="550.30" font-family="Liberation Sans, sans-serif" font-size="26" fill="#fff" stroke="#fff" stroke-width="0.7" text-anchor="middle">6</text>
<path d="M1625.00 168.50 Q1613.24 158.67 1590.79 149.31 A20.25 20.25 0 1 0 1590.34 186.87 Q1613.01 178.05 1625.00 168.50Z" fill="#02b8a0" filter="url(#sh)"/><text x="1585.70" y="177.90" font-family="Liberation Sans, sans-serif" font-size="26" fill="#fff" stroke="#fff" stroke-width="0.7" text-anchor="middle">7</text>
</svg>
</body></html>
